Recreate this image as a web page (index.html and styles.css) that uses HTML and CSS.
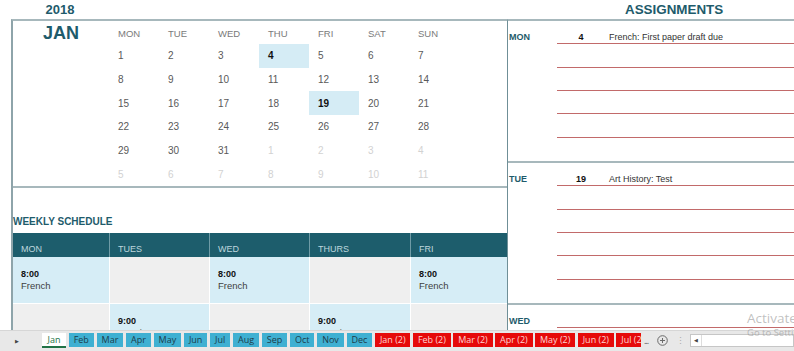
FILE: index.html
```html
<!DOCTYPE html>
<html>
<head>
<meta charset="utf-8">
<title>2018 Planner</title>
<link rel="stylesheet" href="styles.css">
</head>
<body>
<div class="sheet">
  <div class="content">
    <div class="left">
      <div class="year">2018</div>
      <div class="box">
        <div class="cal">
          <div class="month">JAN</div>
          <div class="days">
            <div class="dh">MON</div><div class="dh">TUE</div><div class="dh">WED</div><div class="dh">THU</div><div class="dh">FRI</div><div class="dh">SAT</div><div class="dh">SUN</div>
            <div>1</div><div>2</div><div>3</div><div class="hl">4</div><div>5</div><div>6</div><div>7</div>
            <div>8</div><div>9</div><div>10</div><div>11</div><div>12</div><div>13</div><div>14</div>
            <div>15</div><div>16</div><div>17</div><div>18</div><div class="hl">19</div><div>20</div><div>21</div>
            <div>22</div><div>23</div><div>24</div><div>25</div><div>26</div><div>27</div><div>28</div>
            <div>29</div><div>30</div><div>31</div><div class="nx">1</div><div class="nx">2</div><div class="nx">3</div><div class="nx">4</div>
            <div class="nx">5</div><div class="nx">6</div><div class="nx">7</div><div class="nx">8</div><div class="nx">9</div><div class="nx">10</div><div class="nx">11</div>
          </div>
        </div>
        <div class="divider"></div>
        <div class="ws-title">WEEKLY SCHEDULE</div>
        <div class="sched-head">
          <div>MON</div><div>TUES</div><div>WED</div><div>THURS</div><div>FRI</div>
        </div>
        <div class="sched-body">
          <div class="c blue"><b>8:00</b><span>French</span></div>
          <div class="c gray"></div>
          <div class="c blue"><b>8:00</b><span>French</span></div>
          <div class="c gray"></div>
          <div class="c blue"><b>8:00</b><span>French</span></div>
          <div class="c gray"></div>
          <div class="c blue"><b>9:00</b><span>Art History</span></div>
          <div class="c gray"></div>
          <div class="c blue"><b>9:00</b><span>Art History</span></div>
          <div class="c gray"></div>
        </div>
      </div>
    </div>
    <div class="right">
      <div class="assign">ASSIGNMENTS</div>
      <div class="agenda">
        <div class="sec">
          <div class="ln"><div class="lbl">MON</div><div class="rest"><div class="num">4</div><div class="txt">French: First paper draft due</div></div></div>
          <div class="ln"><div class="lbl"></div><div class="rest"></div></div>
          <div class="ln"><div class="lbl"></div><div class="rest"></div></div>
          <div class="ln"><div class="lbl"></div><div class="rest"></div></div>
          <div class="ln"><div class="lbl"></div><div class="rest"></div></div>
          <div class="ln"><div class="lbl"></div><div class="rest"></div></div>
        </div>
        <div class="sec">
          <div class="ln"><div class="lbl">TUE</div><div class="rest"><div class="num">19</div><div class="txt">Art History: Test</div></div></div>
          <div class="ln"><div class="lbl"></div><div class="rest"></div></div>
          <div class="ln"><div class="lbl"></div><div class="rest"></div></div>
          <div class="ln"><div class="lbl"></div><div class="rest"></div></div>
          <div class="ln"><div class="lbl"></div><div class="rest"></div></div>
          <div class="ln"><div class="lbl"></div><div class="rest"></div></div>
        </div>
        <div class="sec">
          <div class="ln"><div class="lbl">WED</div><div class="rest"><div class="num"></div><div class="txt"></div></div></div>
          <div class="ln"><div class="lbl"></div><div class="rest"></div></div>
          <div class="ln"><div class="lbl"></div><div class="rest"></div></div>
          <div class="ln"><div class="lbl"></div><div class="rest"></div></div>
          <div class="ln"><div class="lbl"></div><div class="rest"></div></div>
          <div class="ln"><div class="lbl"></div><div class="rest"></div></div>
        </div>
      </div>
    </div>
  </div>
  <div class="tabbar">
    <div class="nav"><span class="arr-r">&#9654;</span></div>
    <div class="tabs">
      <div class="tab active">Jan</div>
      <div class="tab bl">Feb</div>
      <div class="tab bl">Mar</div>
      <div class="tab bl">Apr</div>
      <div class="tab bl">May</div>
      <div class="tab bl">Jun</div>
      <div class="tab bl">Jul</div>
      <div class="tab bl">Aug</div>
      <div class="tab bl">Sep</div>
      <div class="tab bl">Oct</div>
      <div class="tab bl">Nov</div>
      <div class="tab bl">Dec</div>
      <div class="tab rd">Jan (2)</div>
      <div class="tab rd">Feb (2)</div>
      <div class="tab rd">Mar (2)</div>
      <div class="tab rd">Apr (2)</div>
      <div class="tab rd">May (2)</div>
      <div class="tab rd">Jun (2)</div>
      <div class="tab rd">Jul (2)</div>
    </div>
    <div class="more">...</div>
    <div class="add"><svg width="11" height="11" viewBox="0 0 11 11"><circle cx="5.5" cy="5.5" r="4.8" fill="none" stroke="#6a6a6a" stroke-width="1"/><path d="M5.5 3v5M3 5.5h5" stroke="#6a6a6a" stroke-width="1"/></svg></div>
    <div class="vdots">&#8942;</div>
    <div class="scroll"><span class="sarr">&#9664;</span></div>
  </div>
  <div class="watermark">
    <div class="wm1">Activate Windows</div>
    <div class="wm2">Go to Settings to activate Windows.</div>
  </div>
</div>
</body>
</html>
```
FILE: styles.css
```css
* { box-sizing: border-box; margin: 0; padding: 0; }
html, body { width: 794px; height: 351px; overflow: hidden; background: #fff; }
body { font-family: "Liberation Sans", Arial, sans-serif; color: #404040; }

.sheet { position: relative; display: flex; flex-direction: column; height: 351px; }
.content { height: 330px; overflow: hidden; display: flex; }

/* ---- left ---- */
.left { margin-left: 11px; width: 496px; flex: none; display: flex; flex-direction: column; }
.year { width: 98px; height: 19px; line-height: 19px; text-align: center; font-weight: bold; font-size: 13px; color: #1e5b6b; }
.box { flex: 1; border-left: 2px solid #8ea4aa; border-top: 2px solid #a7b8bc; }

.cal { display: flex; height: 165px; }
.month { width: 96px; flex: none; text-align: center; font-weight: bold; font-size: 18px; line-height: 24px; color: #1e5b6b; }
.days { display: grid; grid-template-columns: repeat(7, 50px); grid-template-rows: 23px repeat(6, 23.67px); }
.days div { display: flex; align-items: center; padding-left: 9px; font-size: 10px; color: #595959; }
.days .dh { color: #7a7a7a; font-size: 9.5px; padding-top: 1px; }
.days .hl { background: #d5ecf5; font-weight: bold; color: #111; }
.days .nx { color: #d2d2d2; }

.divider { border-top: 2px solid #a7b8bc; }
.ws-title { height: 45px; display: flex; align-items: flex-end; padding-bottom: 6px; font-size: 10px; font-weight: bold; color: #1e5b6b; }

.sched-head, .sched-body { display: grid; grid-template-columns: 96px 99px 99px 100px 1fr; column-gap: 1px; }
.sched-head { height: 24px; background: #6f9ba6; }
.sched-head div { background: #1d5d6c; color: #bdd7de; font-size: 9px; padding: 0 0 3px 8px; display: flex; align-items: flex-end; }
.sched-body { grid-auto-rows: 46px; row-gap: 1px; background: #fff; }
.c { display: flex; flex-direction: column; padding: 11px 0 0 8px; line-height: 12px; }
.c b { font-size: 9px; color: #111; }
.c span { font-size: 9.5px; color: #404040; }
.c.blue { background: #d6edf6; }
.c.gray { background: #efefef; }

/* ---- right ---- */
.right { flex: 1; display: flex; flex-direction: column; }
.assign { height: 19px; line-height: 19px; font-weight: bold; font-size: 13.4px; color: #1e5b6b; padding-left: 118px; }
.agenda { flex: 1; border-left: 1px solid #6f8f97; border-top: 2px solid #a7b8bc; }
.sec { height: 142px; border-bottom: 2px solid #a7b8bc; display: flex; flex-direction: column; }
.ln { flex: 1; display: flex; align-items: stretch; }
.lbl { width: 49px; flex: none; padding-left: 1px; font-weight: bold; font-size: 9px; line-height: 10px; color: #1e5b6b; display: flex; align-items: flex-end; padding-bottom: 2px; }
.rest { flex: 1; display: flex; align-items: flex-end; border-bottom: 1px solid #c26a6a; padding-bottom: 1px; }
.ln:last-child .rest { border-bottom: none; }
.num { width: 48px; flex: none; text-align: center; font-weight: bold; font-size: 9px; line-height: 10px; color: #111; }
.txt { padding-left: 4px; font-size: 9px; line-height: 10px; color: #333; }

/* ---- tab bar ---- */
.tabbar { height: 21px; background: #e8e8e8; border-top: 1px solid #d6d6d6; display: flex; align-items: flex-start; font-family: "Open Sans", "Noto Sans", sans-serif; font-size: 9px; }
.nav { width: 42px; flex: none; height: 20px; display: flex; align-items: center; font-size: 5px; color: #444; }
.arr-r { margin-left: 15px; }
.tabs { display: flex; gap: 2.7px; width: 599px; flex: none; overflow: hidden; margin-top: 2px; }
.tab { flex: none; height: 14px; line-height: 14px; padding: 0 5px; white-space: nowrap; }
.tab.active { background: #fff; color: #217346; height: 15px; border-bottom: 2px solid #217346; line-height: 13px; padding: 0 5.5px; }
.tab.bl { background: #3fb0d2; color: #1d3c4a; }
.tab.rd { background: #e60a0a; color: #ffd4d4; padding: 0 4.8px; }
.more { margin: 3px 0 0 3px; color: #555; font-size: 9px; letter-spacing: -1px; }
.add { margin: 4px 0 0 9px; height: 11px; }
.vdots { margin: 3px 0 0 8px; color: #aaa; font-size: 9px; }
.scroll { margin: 3px 0 0 5px; flex: 1; height: 13px; background: #fff; border: 1px solid #c6c6c6; display: flex; align-items: center; }
.sarr { font-size: 5px; color: #444; padding: 0 3px; border-right: 1px solid #ddd; height: 11px; line-height: 11px; }

/* ---- watermark ---- */
.watermark { position: absolute; left: 747px; top: 310px; white-space: nowrap; font-family: "Open Sans", "Noto Sans", sans-serif; color: rgba(140, 140, 140, 0.55); }
.wm1 { font-size: 13.5px; line-height: 17px; }
.wm2 { font-size: 9.5px; line-height: 12px; }
```
